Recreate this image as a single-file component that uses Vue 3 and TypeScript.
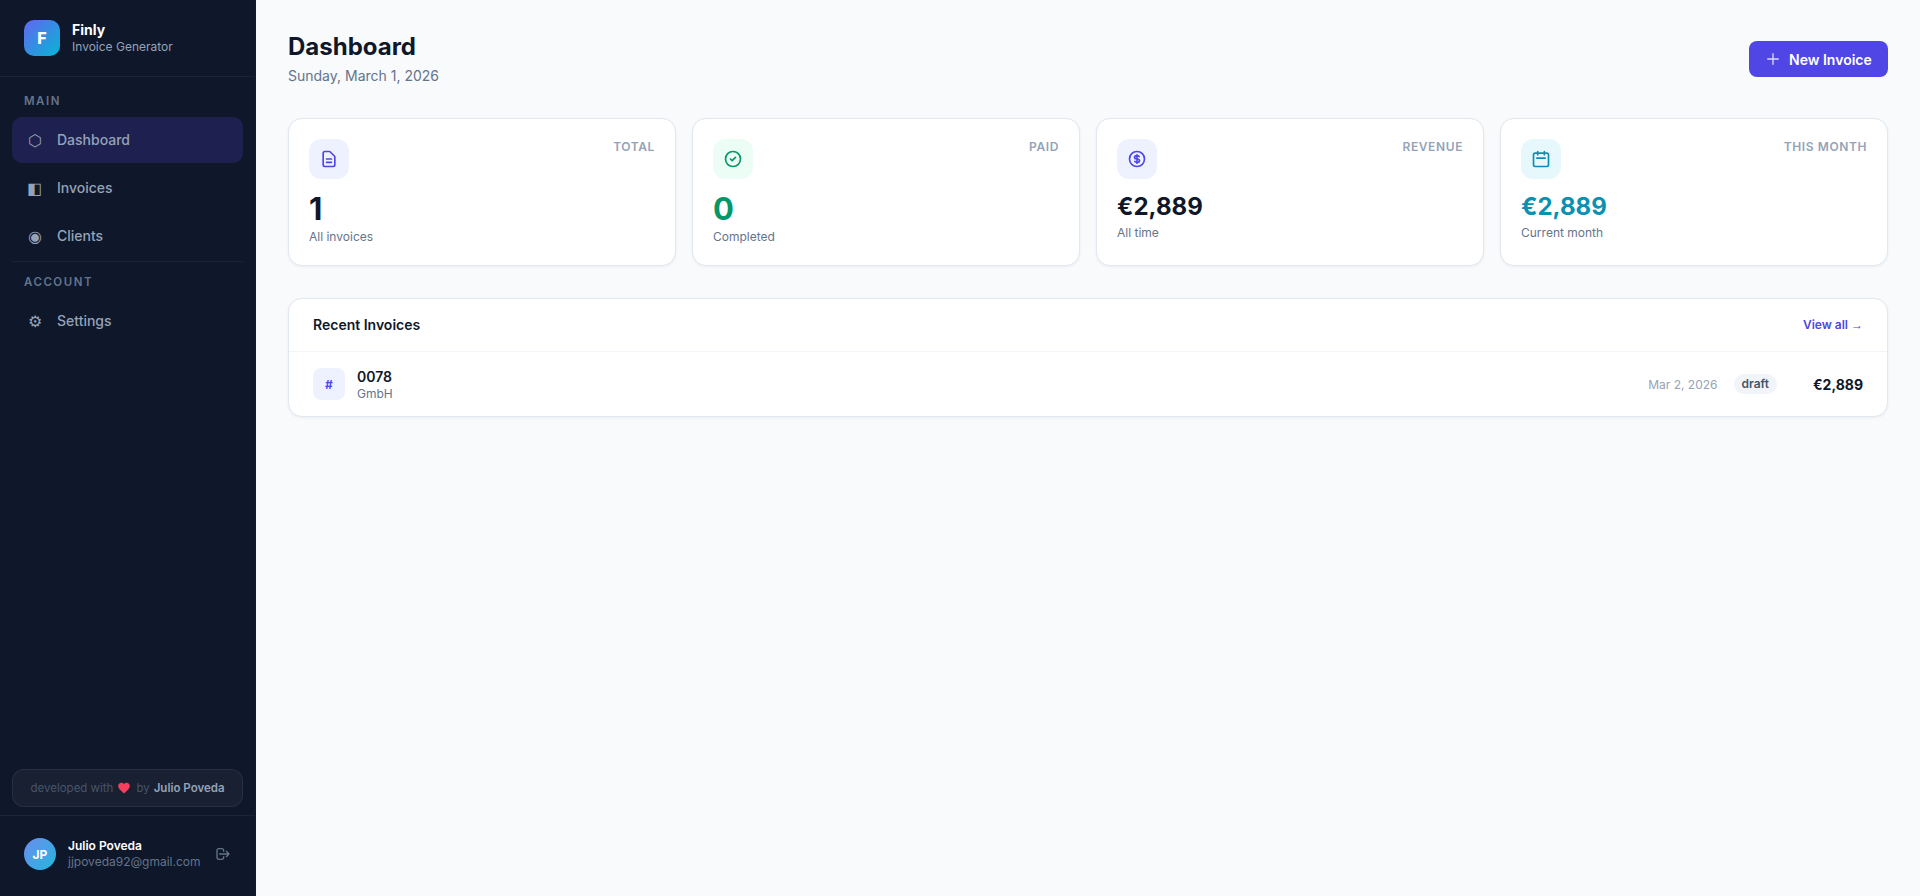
<template>
  <div class="layout">
    <aside class="sidebar">
      <div class="brand">
        <div class="brand-logo">F</div>
        <div class="brand-text">
          <div class="brand-name">Finly</div>
          <div class="brand-sub">Invoice Generator</div>
        </div>
      </div>

      <nav class="nav">
        <div class="nav-section">Main</div>
        <a
          v-for="item in mainNav"
          :key="item.label"
          :class="['nav-item', { active: item.active }]"
        >
          <span class="nav-icon">{{ item.icon }}</span>
          <span>{{ item.label }}</span>
        </a>
        <div class="nav-divider"></div>
        <div class="nav-section account">Account</div>
        <a class="nav-item">
          <span class="nav-icon">⚙</span>
          <span>Settings</span>
        </a>
      </nav>

      <div class="credit">
        developed with
        <svg class="heart" viewBox="0 0 24 24"><path d="M12 21.4 10.5 20C5.4 15.4 2 12.3 2 8.5 2 5.4 4.4 3 7.5 3c1.7 0 3.4.8 4.5 2.1C13.100 3.800 14.800 3 16.500 3 19.600 3 22 5.400 22 8.500c0 3.800-3.400 6.900-8.500 11.500z" /></svg>
        by <strong>Julio Poveda</strong>
      </div>

      <div class="user">
        <div class="avatar">JP</div>
        <div class="user-text">
          <div class="user-name">Julio Poveda</div>
          <div class="user-mail">jjpoveda92@gmail.com</div>
        </div>
        <svg class="logout" viewBox="0 0 24 24" fill="none" stroke="currentColor" stroke-width="2" stroke-linecap="round" stroke-linejoin="round">
          <path d="M17 16l4-4m0 0l-4-4m4 4H7m6 4v1a3 3 0 01-3 3H6a3 3 0 01-3-3V7a3 3 0 013-3h4a3 3 0 013 3v1" />
        </svg>
      </div>
    </aside>

    <main class="main">
      <header class="page-head">
        <div>
          <h1>Dashboard</h1>
          <p>Sunday, March 1, 2026</p>
        </div>
        <button class="new-btn">
          <svg viewBox="0 0 24 24" fill="none" stroke="currentColor" stroke-width="2" stroke-linecap="round">
            <path d="M12 4v16m8-8H4" />
          </svg>
          New Invoice
        </button>
      </header>

      <section class="stats">
        <div v-for="card in stats" :key="card.label" class="stat-card">
          <div class="stat-top">
            <div :class="['stat-icon', card.tone]">
              <svg viewBox="0 0 24 24" fill="none" stroke="currentColor" stroke-width="2" stroke-linecap="round" stroke-linejoin="round">
                <path :d="card.path" />
              </svg>
            </div>
            <span class="stat-label">{{ card.label }}</span>
          </div>
          <div :class="['stat-value', card.size, card.valueTone]">{{ card.value }}</div>
          <div class="stat-note">{{ card.note }}</div>
        </div>
      </section>

      <section class="recent">
        <div class="recent-head">
          <h2>Recent Invoices</h2>
          <a class="view-all">View all <span class="arrow">→</span></a>
        </div>
        <div class="invoice-row">
          <div class="hash">#</div>
          <div class="invoice-id">
            <div class="invoice-no">0078</div>
            <div class="invoice-client">GmbH</div>
          </div>
          <span class="invoice-date">Mar 2, 2026</span>
          <span class="badge">draft</span>
          <span class="invoice-total">€2,889</span>
        </div>
      </section>
    </main>
  </div>
</template>

<script setup lang="ts">
const mainNav = [
  { label: 'Dashboard', icon: '⬡', active: true },
  { label: 'Invoices', icon: '◧', active: false },
  { label: 'Clients', icon: '◉', active: false }
]

const stats = [
  {
    label: 'TOTAL',
    value: '1',
    note: 'All invoices',
    tone: 'indigo',
    size: 'big',
    valueTone: '',
    path: 'M9 12h6m-6 4h6m2 5H7a2 2 0 01-2-2V5a2 2 0 012-2h5.586a1 1 0 01.707.293l5.414 5.414a1 1 0 01.293.707V19a2 2 0 01-2 2z'
  },
  {
    label: 'PAID',
    value: '0',
    note: 'Completed',
    tone: 'green',
    size: 'big',
    valueTone: 'paid',
    path: 'M9 12l2 2 4-4m6 2a9 9 0 11-18 0 9 9 0 0118 0z'
  },
  {
    label: 'REVENUE',
    value: '€2,889',
    note: 'All time',
    tone: 'indigo',
    size: '',
    valueTone: '',
    path: 'M12 8c-1.657 0-3 .895-3 2s1.343 2 3 2 3 .895 3 2-1.343 2-3 2m0-8c1.11 0 2.08.402 2.599 1M12 8V7m0 1v8m0 0v1m0-1c-1.11 0-2.08-.402-2.599-1M21 12a9 9 0 11-18 0 9 9 0 0118 0z'
  },
  {
    label: 'THIS MONTH',
    value: '€2,889',
    note: 'Current month',
    tone: 'cyan',
    size: '',
    valueTone: 'month',
    path: 'M8 7V3m8 4V3m-9 8h10M5 21h14a2 2 0 002-2V7a2 2 0 00-2-2H5a2 2 0 00-2 2v12a2 2 0 002 2z'
  }
]
</script>

<style>
html,
body {
  margin: 0;
  background: #f8fafc;
}
</style>

<style scoped>
* {
  box-sizing: border-box;
}

.layout {
  display: flex;
  height: 896px;
  font-family: Inter, "Liberation Sans", sans-serif;
  background: #f8fafc;
  color: #0f172a;
}

.sidebar {
  width: 256px;
  flex-shrink: 0;
  display: flex;
  flex-direction: column;
  background: #0f172a;
  border-right: 1px solid rgba(255, 255, 255, 0.02);
}

.brand {
  display: flex;
  align-items: center;
  gap: 12px;
  padding: 20px 24px;
  height: 77px;
  border-bottom: 1px solid rgba(255, 255, 255, 0.06);
}

.brand-logo {
  width: 36px;
  height: 36px;
  border-radius: 10px;
  display: flex;
  align-items: center;
  justify-content: center;
  background: linear-gradient(135deg, #6366f1, #06b6d4);
  color: #fff;
  font-size: 16px;
  font-weight: 800;
}

.brand-name {
  font-size: 14px;
  font-weight: 700;
  line-height: 16px;
  color: #fff;
}

.brand-sub {
  margin-top: 1px;
  font-size: 12px;
  line-height: 16px;
  color: #94a3b8;
}

.nav {
  flex: 1;
  padding: 0 12px;
}

.nav-section {
  padding: 17px 12px 9px;
  font-size: 11.5px;
  line-height: 14px;
  font-weight: 600;
  letter-spacing: 1.5px;
  text-transform: uppercase;
  color: #64748b;
}

.nav-section.account {
  padding-top: 13px;
}

.nav-item {
  display: flex;
  align-items: center;
  gap: 12px;
  height: 46px;
  margin-bottom: 2px;
  padding: 0 12px 1px;
  border-radius: 10px;
  font-size: 14px;
  font-weight: 500;
  color: #94a3b8;
}

.nav-item.active {
  background: #1e2050;
}

.nav-icon {
  width: 21px;
  text-align: center;
  font-size: 16px;
}

.nav-divider {
  height: 1px;
  background: rgba(255, 255, 255, 0.05);
}

.credit {
  display: flex;
  align-items: center;
  justify-content: center;
  gap: 4px;
  height: 38px;
  margin: 0 12px 8px;
  border: 1px solid rgba(255, 255, 255, 0.07);
  border-radius: 12px;
  background: rgba(255, 255, 255, 0.04);
  font-size: 11.5px;
  color: #475569;
  white-space: nowrap;
}

.credit strong {
  font-weight: 600;
  color: #94a3b8;
}

.heart {
  width: 14px;
  height: 14px;
  margin-right: 1px;
  fill: #f43f5e;
}

.user {
  display: flex;
  align-items: center;
  gap: 12px;
  height: 81px;
  padding: 0 24px 4px;
  border-top: 1px solid rgba(255, 255, 255, 0.06);
}

.avatar {
  width: 32px;
  height: 32px;
  border-radius: 50%;
  display: flex;
  align-items: center;
  justify-content: center;
  flex-shrink: 0;
  background: linear-gradient(135deg, #6d8cf0, #22b8dc);
  color: #fff;
  font-size: 12px;
  font-weight: 700;
}

.user-text {
  flex: 1;
  min-width: 0;
}

.user-name {
  font-size: 12px;
  line-height: 16px;
  font-weight: 600;
  color: #fff;
}

.user-mail {
  font-size: 12px;
  line-height: 16px;
  color: #64748b;
}

.logout {
  width: 16px;
  height: 16px;
  color: #64748b;
}

.main {
  flex: 1;
  min-width: 0;
  padding: 32px;
}

.page-head {
  display: flex;
  align-items: center;
  justify-content: space-between;
  height: 54px;
  margin-bottom: 32px;
}

.page-head h1 {
  margin: 0;
  font-size: 24px;
  line-height: 30px;
  font-weight: 700;
  color: #0f172a;
}

.page-head p {
  margin: 4px 0 0;
  font-size: 14px;
  line-height: 20px;
  color: #64748b;
}

.new-btn {
  display: flex;
  align-items: center;
  gap: 8px;
  width: 139px;
  height: 36px;
  padding: 0 16px;
  border: none;
  border-radius: 8px;
  background: #4f46e5;
  color: #fff;
  font-family: inherit;
  font-size: 14px;
  font-weight: 600;
}

.new-btn svg {
  width: 16px;
  height: 16px;
  flex-shrink: 0;
  opacity: 0.8;
}

.stats {
  display: grid;
  grid-template-columns: repeat(4, 1fr);
  gap: 16px;
  margin-bottom: 32px;
}

.stat-card {
  height: 148px;
  padding: 20px;
  background: #fff;
  border: 1px solid #e2e8f0;
  border-radius: 14px;
  box-shadow: 0 1px 3px rgba(15, 23, 42, 0.06);
}

.stat-top {
  display: flex;
  align-items: flex-start;
  justify-content: space-between;
  margin-bottom: 12px;
}

.stat-icon {
  width: 40px;
  height: 40px;
  border-radius: 12px;
  display: flex;
  align-items: center;
  justify-content: center;
}

.stat-icon svg {
  width: 20px;
  height: 20px;
}

.stat-icon.indigo {
  background: #eef2ff;
  color: #4f46e5;
}

.stat-icon.green {
  background: #ecfdf5;
  color: #059669;
}

.stat-icon.cyan {
  background: #e6f8fb;
  color: #0891b2;
}

.stat-label {
  font-size: 12px;
  line-height: 16px;
  font-weight: 600;
  letter-spacing: 0.6px;
  color: #94a3b8;
}

.stat-value {
  margin-bottom: 2px;
  font-size: 24px;
  line-height: 32px;
  font-weight: 700;
  color: #0f172a;
}

.stat-value.big {
  font-size: 31px;
  line-height: 36px;
}

.stat-value.paid {
  color: #059669;
}

.stat-value.month {
  color: #0891b2;
}

.stat-note {
  font-size: 12px;
  line-height: 16px;
  color: #64748b;
}

.recent {
  background: #fff;
  border: 1px solid #e2e8f0;
  border-radius: 14px;
  box-shadow: 0 1px 3px rgba(15, 23, 42, 0.06);
  overflow: hidden;
}

.recent-head {
  display: flex;
  align-items: center;
  justify-content: space-between;
  height: 53px;
  padding: 0 24px 1px;
  border-bottom: 1px solid #f1f5f9;
}

.recent-head h2 {
  margin: 0;
  font-size: 14px;
  font-weight: 600;
  color: #0f172a;
}

.view-all {
  font-size: 12px;
  font-weight: 600;
  color: #4f46e5;
}

.arrow {
  font-family: "Liberation Sans", sans-serif;
}

.invoice-row {
  display: flex;
  align-items: center;
  height: 64px;
  padding: 0 24px;
}

.hash {
  width: 32px;
  height: 32px;
  border-radius: 8px;
  display: flex;
  align-items: center;
  justify-content: center;
  margin-right: 12px;
  background: #eef2ff;
  color: #4f46e5;
  font-size: 12px;
  font-weight: 700;
}

.invoice-id {
  flex: 1;
  padding-top: 1px;
}

.invoice-no {
  margin-bottom: 1px;
  font-size: 14px;
  line-height: 17px;
  font-weight: 600;
  color: #0f172a;
}

.invoice-client {
  font-size: 12px;
  line-height: 16px;
  color: #64748b;
}

.invoice-date {
  margin-right: 16px;
  font-size: 12px;
  color: #94a3b8;
}

.badge {
  padding: 3px 8px;
  margin-right: 36px;
  border-radius: 999px;
  background: #f1f5f9;
  color: #475569;
  font-size: 12px;
  line-height: 14px;
  font-weight: 600;
}

.invoice-total {
  font-size: 14px;
  font-weight: 700;
  color: #0f172a;
}
</style>
